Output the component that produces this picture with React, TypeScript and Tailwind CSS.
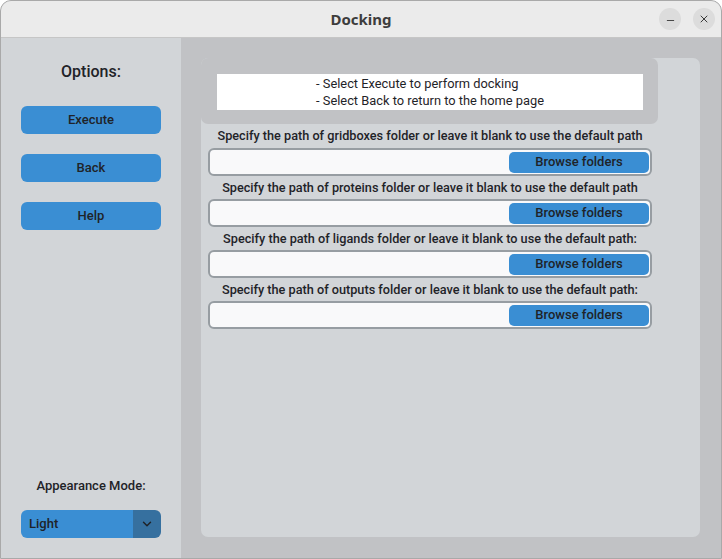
import { ChevronDown, Minus, X } from 'lucide-react'

const font = { fontFamily: 'Roboto, "Noto Sans", sans-serif' }

const sideButtons = ['Execute', 'Back', 'Help']

const folders = [
  'Specify the path of gridboxes folder or leave it blank to use the default path',
  'Specify the path of proteins folder or leave it blank to use the default path',
  'Specify the path of ligands folder or leave it blank to use the default path:',
  'Specify the path of outputs folder or leave it blank to use the default path:',
]

export default function App() {
  return (
    <div
      className="w-[722px] h-[559px] flex flex-col bg-[#c1c2c5] border border-[#a9a9a9] rounded-t-[11px] overflow-hidden text-[#1f2328]"
      style={font}
    >
      {/* Title bar */}
      <div className="h-[37px] shrink-0 flex items-center justify-center relative bg-[#ebebeb] border-b border-[#c6c6c6]">
        <span className="text-[15px] font-bold text-[#3d3d3d]" style={{ fontFamily: '"Noto Sans", sans-serif' }}>
          Docking
        </span>
        <div className="absolute right-[6px] top-[7px] flex gap-[12px]">
          <div className="w-[22px] h-[22px] rounded-full bg-[#dcdcdc] flex items-end justify-center pb-[4px]">
            <Minus className="w-[11px] h-[11px] text-[#3a3a3a]" strokeWidth={2} />
          </div>
          <div className="w-[22px] h-[22px] rounded-full bg-[#dcdcdc] flex items-center justify-center">
            <X className="w-[12px] h-[12px] text-[#3a3a3a]" strokeWidth={2} />
          </div>
        </div>
      </div>

      <div className="flex flex-1 min-h-0">
        {/* Sidebar */}
        <div className="w-[180px] shrink-0 bg-[#d2d5d8] flex flex-col items-center">
          <div className="mt-[23px] h-[22px] flex items-center text-[16px] font-medium">Options:</div>
          <div className="mt-[23px] flex flex-col gap-[20px]">
            {sideButtons.map((b) => (
              <button
                key={b}
                className="w-[140px] h-[28px] rounded-[6px] bg-[#3a8ed3] text-[13px] font-medium flex items-center justify-center"
              >
                {b}
              </button>
            ))}
          </div>
          <div className="mt-auto text-[13px] font-medium h-[20px] flex items-center">Appearance Mode:</div>
          <div className="mt-[14px] mb-[20px] w-[140px] h-[28px] rounded-[6px] overflow-hidden flex">
            <div className="flex-1 bg-[#3a8ed3] flex items-center pl-[8px] text-[13px] font-medium">Light</div>
            <div className="w-[28px] bg-[#36709f] flex items-center justify-center">
              <ChevronDown className="w-[14px] h-[14px] text-[#1f2328]" strokeWidth={2.5} />
            </div>
          </div>
        </div>

        {/* Main */}
        <div className="flex-1 p-[20px]">
          <div className="w-[499px] h-[479px] rounded-[7px] bg-[#d2d5d8]">
            <div className="w-[457px] h-[66px] rounded-[7px] bg-[#c1c2c5] pt-[16px] pl-[16px]">
              <div className="w-[426px] h-[36px] bg-white flex justify-center text-[12.85px] leading-[17px] pt-px">
                <div className="text-left">
                  <div>- Select Execute to perform docking</div>
                  <div>- Select Back to return to the home page</div>
                </div>
              </div>
            </div>

            <div className="pl-[7px] flex flex-col">
              {folders.map((f, i) => (
                <div key={i} className="w-[444px] flex flex-col">
                  <div className={`${i === 0 ? 'h-[24px]' : 'h-[23px]'} flex items-center justify-center text-[12.7px] font-medium`}>
                    {f}
                  </div>
                  <div className="h-[28px] rounded-[6px] border-2 border-[#979da2] bg-[#f9f9fa] flex justify-end items-center pr-px">
                    <button className="w-[140px] h-[21px] rounded-[5px] bg-[#3a8ed3] text-[13px] font-medium flex items-center justify-center">
                      Browse folders
                    </button>
                  </div>
                </div>
              ))}
            </div>
          </div>
        </div>
      </div>
    </div>
  )
}
